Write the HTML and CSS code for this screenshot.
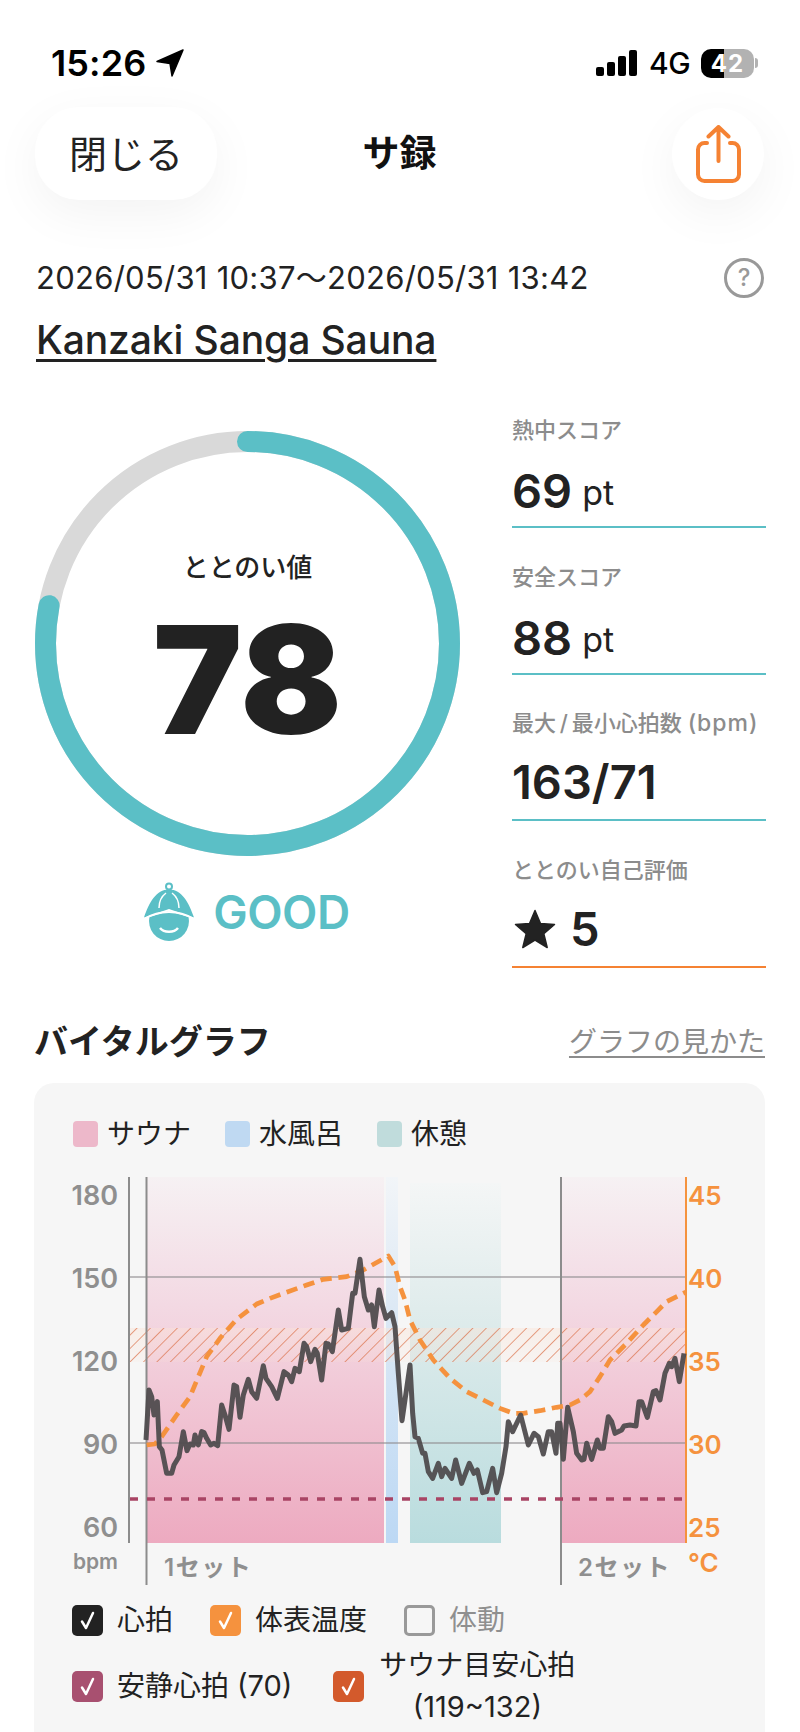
FILE: index.html
```html
<!DOCTYPE html>
<html lang="ja">
<head>
<meta charset="utf-8">
<title>サ録</title>
<link rel="stylesheet" href="styles.css">
</head>
<body>
<div class="status">
  <div class="status-left">
    <span class="time">15:26</span>
    <svg class="loc" viewBox="0 0 28 28"><path d="M27 1 1 12.500 14 14.500 16 27Z" fill="#000" stroke="#000" stroke-width="1.500" stroke-linejoin="round"/></svg>
  </div>
  <div class="status-right">
    <div class="signal"><i class="b1"></i><i class="b2"></i><i class="b3"></i><i class="b4"></i></div>
    <span class="net">4G</span>
    <div class="battery"><span>42</span></div>
    <div class="battery-tip"></div>
  </div>
</div>

<nav class="nav">
  <button class="close">閉じる</button>
  <h1 class="nav-title">サ録</h1>
  <button class="share">
    <svg viewBox="0 0 45 58" width="45" height="58"><path d="M11 18H8.500A6.500 6.500 0 0 0 2 24.500V49.500A6.500 6.500 0 0 0 8.500 56H36.500A6.500 6.500 0 0 0 43 49.500V24.500A6.500 6.500 0 0 0 36.500 18H34M22.500 36V2M12.500 11.500 22.500 2 32.500 11.500" fill="none" stroke="#f58233" stroke-width="4" stroke-linecap="round" stroke-linejoin="round"/></svg>
  </button>
</nav>

<div class="when">
  <span>2026/05/31 10:37～2026/05/31 13:42</span>
  <span class="help">?</span>
</div>
<a class="place">Kanzaki Sanga Sauna</a>

<section class="main">
  <div class="gauge-col">
    <div class="gauge">
      <svg viewBox="0 0 425 425" width="425" height="425">
        <circle cx="212.500" cy="212.500" r="202" fill="none" stroke="#d9d9d9" stroke-width="21"/>
        <circle cx="212.500" cy="212.500" r="202" fill="none" stroke="#5bbfc6" stroke-width="21" stroke-linecap="round" pathLength="100" stroke-dasharray="78 22" transform="rotate(-90 212.500 212.500)"/>
      </svg>
      <div class="gauge-text">
        <div class="gauge-label">ととのい値</div>
        <div class="gauge-num">78</div>
      </div>
    </div>
    <div class="grade">
      <svg viewBox="144 882 52 59" width="52" height="59">
        <circle cx="170" cy="886.500" r="3" fill="none" stroke="#5bbfc6" stroke-width="2"/>
        <path d="M150.400 917 170 911 189.600 917A20 20 0 1 1 150.400 917Z" fill="#5bbfc6"/>
        <path d="M170 889.500C157 889.500 150 903 145 917.500L170 909 195 917.500C190 903 183 889.500 170 889.500Z" fill="#5bbfc6"/>
        <path d="M145 919Q157 912 170 912T195 919" fill="none" stroke="#fff" stroke-width="2"/>
        <path d="M160 908C160 901 163 896 167 893M180 908C180 901 177 896 173 893" fill="none" stroke="#fff" stroke-width="1.500"/>
        <path d="M161 928C165 933 175 933 179 928" fill="none" stroke="#fff" stroke-width="2.500"/>
      </svg>
      <span>GOOD</span>
    </div>
  </div>
  <div class="scores">
    <div class="score"><div class="score-label">熱中スコア</div><div class="score-val">69 <small>pt</small></div></div>
    <div class="score"><div class="score-label">安全スコア</div><div class="score-val">88 <small>pt</small></div></div>
    <div class="score"><div class="score-label">最大&#8201;/&#8201;最小心拍数 <span class="unit">(bpm)</span></div><div class="score-val">163/71</div></div>
    <div class="score score-self"><div class="score-label">ととのい自己評価</div><div class="score-val"><svg class="star" viewBox="0 0 42 40" width="42" height="40"><path d="M21 1.500 26.500 14.500 40.500 15.500 29.800 24.700 33.200 38.500 21 31 8.800 38.500 12.200 24.700 1.500 15.500 15.500 14.500Z" fill="#222" stroke="#222" stroke-width="1.500" stroke-linejoin="round"/></svg>5</div></div>
  </div>
</section>

<div class="section-head">
  <h2>バイタルグラフ</h2>
  <a>グラフの見かた</a>
</div>

<section class="card">
  <div class="legend">
    <div class="legend-item"><i class="sw sw-sauna"></i>サウナ</div>
    <div class="legend-item"><i class="sw sw-water"></i>水風呂</div>
    <div class="legend-item"><i class="sw sw-rest"></i>休憩</div>
  </div>

  <svg class="chart" viewBox="34 1165 731 432" width="731" height="432">
    <defs>
      <linearGradient id="gPink" x1="0" y1="0" x2="0" y2="1">
        <stop offset="0" stop-color="#f6f1f3"/><stop offset=".35" stop-color="#f3d9e3"/><stop offset="1" stop-color="#edaac0"/>
      </linearGradient>
      <linearGradient id="gBlue" x1="0" y1="0" x2="0" y2="1">
        <stop offset="0" stop-color="#f2f5f8"/><stop offset=".35" stop-color="#dde9f5"/><stop offset="1" stop-color="#bcd8f4"/>
      </linearGradient>
      <linearGradient id="gRest" x1="0" y1="0" x2="0" y2="1">
        <stop offset="0" stop-color="#f4f6f6"/><stop offset=".35" stop-color="#e0ecec"/><stop offset="1" stop-color="#b9dcde"/>
      </linearGradient>
      <pattern id="hatch" width="9.500" height="9.500" patternUnits="userSpaceOnUse" patternTransform="rotate(45)">
        <line x1="0" y1="0" x2="0" y2="9.500" stroke="#d9663c" stroke-width="1.500" stroke-opacity=".8"/>
      </pattern>
      <linearGradient id="gBand" x1="0" y1="0" x2="0" y2="1">
        <stop offset="0" stop-color="#fbe3d6" stop-opacity=".45"/><stop offset="1" stop-color="#fbe3d6" stop-opacity=".15"/>
      </linearGradient>
    </defs>

    <rect x="147" y="1177" width="237" height="366" fill="url(#gPink)"/>
    <rect x="386" y="1177" width="12" height="366" fill="url(#gBlue)"/>
    <rect x="410" y="1183" width="91" height="360" fill="url(#gRest)"/>
    <rect x="562" y="1177" width="124" height="366" fill="url(#gPink)"/>

    <line class="grid" x1="130" x2="686" y1="1277" y2="1277"/>
    <line class="grid" x1="130" x2="686" y1="1443" y2="1443"/>

    <rect x="130" y="1328" width="556" height="34" fill="url(#gBand)"/>
    <rect x="130" y="1328" width="556" height="34" fill="url(#hatch)"/>

    <line class="axis" x1="129" x2="129" y1="1177" y2="1543"/>
    <line class="axis" x1="146.500" x2="146.500" y1="1177" y2="1585"/>
    <line class="axis" x1="561" x2="561" y1="1177" y2="1585"/>
    <line class="axis-t" x1="686" x2="686" y1="1177" y2="1543"/>

    <line class="rest-line" x1="130" x2="686" y1="1499" y2="1499"/>

    <g transform="translate(30 1300) scale(.33333)">
      <polyline class="temp" points="350,435 375,432 395,410 440,345 480,290 505,230 530,170 570,115 620,58 680,12 720,-5 830,-45 880,-62 950,-70 1000,-90 1075,-132 1095,-100 1110,-40 1125,0 1140,60 1170,120 1210,180 1260,235 1310,275 1360,300 1410,325 1450,340 1480,340 1530,332 1580,322 1620,315 1650,300 1680,275 1710,230 1740,180 1790,130 1840,75 1910,5 1968,-24"/>
      <polyline class="heart" points="348,420 357,270 365,290 372,345 382,305 388,440 396,450 410,520 425,520 432,495 447,470 460,395 471,452 480,432 490,435 495,405 505,435 515,395 522,398 530,415 542,435 552,430 563,437 575,315 585,345 597,388 612,255 620,260 630,352 640,285 655,238 665,275 680,295 700,197 708,235 725,260 742,295 762,215 775,225 785,245 795,205 808,215 822,130 830,140 842,185 855,148 862,160 875,240 888,130 895,132 907,155 925,30 935,90 955,85 968,-20 975,-20 990,-122 1003,-10 1015,30 1025,15 1033,80 1047,-30 1058,20 1068,55 1085,38 1095,80 1105,220 1116,362 1125,300 1140,195 1148,340 1155,410 1165,415 1178,460 1185,460 1195,515 1208,535 1225,490 1235,530 1245,505 1265,535 1277,480 1295,550 1318,490 1332,520 1342,510 1358,578 1370,575 1388,505 1400,578 1415,520 1428,440 1435,365 1448,395 1472,345 1495,435 1512,400 1525,410 1540,462 1555,395 1565,395 1578,460 1583,370 1590,370 1600,478 1613,322 1630,395 1640,460 1655,480 1662,478 1670,430 1685,478 1702,420 1710,445 1720,445 1735,350 1745,365 1755,400 1775,390 1782,378 1800,375 1818,378 1827,305 1835,305 1852,352 1870,275 1878,272 1890,300 1905,220 1918,190 1925,200 1935,175 1948,245 1962,160"/>
    </g>

    <text class="tick" x="118" y="1205">180</text>
    <text class="tick" x="118" y="1288">150</text>
    <text class="tick" x="118" y="1371">120</text>
    <text class="tick" x="118" y="1454">90</text>
    <text class="tick" x="118" y="1537">60</text>
    <text class="bpm" x="118" y="1569">bpm</text>

    <text class="tick-r" x="688" y="1205">45</text>
    <text class="tick-r" x="688" y="1288">40</text>
    <text class="tick-r" x="688" y="1371">35</text>
    <text class="tick-r" x="688" y="1454">30</text>
    <text class="tick-r" x="688" y="1537">25</text>
    <text class="tick-r" x="688" y="1572">°C</text>

    <text class="set" x="164" y="1576">1セット</text>
    <text class="set" x="578" y="1576">2セット</text>
  </svg>

  <div class="checks">
    <label class="check"><i class="box box-black"><svg viewBox="0 0 31 31"><path d="M10 16.500 14 23 21 8"/></svg></i>心拍</label>
    <label class="check"><i class="box box-orange"><svg viewBox="0 0 31 31"><path d="M10 16.500 14 23 21 8"/></svg></i>体表温度</label>
    <label class="check check-off"><i class="box box-empty"></i>体動</label>
  </div>
  <div class="checks checks-2">
    <label class="check"><i class="box box-maroon"><svg viewBox="0 0 31 31"><path d="M10 16.500 14 23 21 8"/></svg></i><span>安静心拍 <span class="num">(70)</span></span></label>
    <label class="check check-wide"><i class="box box-red"><svg viewBox="0 0 31 31"><path d="M10 16.500 14 23 21 8"/></svg></i><span class="check-lines">サウナ目安心拍<br><span class="num">(119~132)</span></span></label>
  </div>
</section>
</body>
</html>
```

FILE: styles.css
```css
* { box-sizing: border-box; }
html, body { margin: 0; padding: 0; height: 1732px; overflow: hidden; background: #fff; }
body { font-family: "Inter", "Noto Sans CJK JP", sans-serif; color: #222; }
h1, h2 { margin: 0; }

.status { height: 107px; padding: 44px 42px 0 51px; display: flex; justify-content: space-between; align-items: flex-start; color: #000; }
.status-left { display: flex; align-items: center; gap: 10px; height: 38px; }
.time { font-size: 36px; font-weight: 600; letter-spacing: .1px; line-height: 38px; }
.loc { width: 28px; height: 28px; }
.status-right { display: flex; align-items: center; height: 38px; }
.signal { display: flex; align-items: flex-end; gap: 3px; height: 26px; width: 41px; }
.signal i { width: 8px; background: #000; border-radius: 2px; display: block; }
.b1 { height: 9px; } .b2 { height: 14px; } .b3 { height: 20px; } .b4 { height: 26px; }
.net { margin-left: 12px; font-size: 30px; font-weight: 500; line-height: 38px; width: 40px; letter-spacing: -.5px; }
.battery { margin-left: 12px; width: 53px; height: 29px; border-radius: 10px; background: linear-gradient(90deg, #000 0 43%, #b2b2b2 43% 100%); color: #fff; font-size: 24px; font-weight: 700; line-height: 29px; text-align: center; letter-spacing: 1px; }
.battery-tip { width: 3px; height: 10px; margin-left: 1px; background: #b2b2b2; border-radius: 0 3px 3px 0; }

.nav { height: 93px; padding: 0 36px 0 35px; display: flex; justify-content: space-between; align-items: center; }
.close { width: 182px; height: 93px; border: 0; border-radius: 44px; background: #fff; box-shadow: 0 14px 50px rgba(0,0,0,.05); font: 400 38px/1 "Inter", "Noto Sans CJK JP", sans-serif; color: #222; padding: 0; }
.nav-title { font-size: 37px; font-weight: 700; color: #111; line-height: 93px; margin-left: -90px; }
.share { width: 92px; height: 92px; border: 0; border-radius: 50%; background: #fff; box-shadow: 0 14px 50px rgba(0,0,0,.05); padding: 0; display: flex; align-items: center; justify-content: center; }

.when { margin-top: 58px; padding: 0 36px; height: 40px; display: flex; justify-content: space-between; align-items: center; font-size: 31px; line-height: 40px; letter-spacing: .26px; }
.help { width: 40px; height: 40px; border: 3px solid #999; border-radius: 50%; color: #999; font-size: 24px; line-height: 33px; text-align: center; font-weight: 500; letter-spacing: 0; }
.place { display: inline-block; margin: 19px 0 0 36px; font-size: 39px; line-height: 45px; font-weight: 500; color: #222; letter-spacing: -.1px; text-decoration: underline; text-decoration-thickness: 3px; text-underline-offset: 5px; }

.main { display: flex; gap: 52px; padding: 0 34px 0 35px; margin-top: 53px; }
.gauge-col { width: 425px; padding-top: 16px; flex: none; }
.gauge { position: relative; width: 425px; height: 425px; }
.gauge svg { display: block; }
.gauge-text { position: absolute; inset: 0; display: flex; flex-direction: column; align-items: center; }
.gauge-label { margin-top: 118px; font-size: 26px; font-weight: 500; line-height: 38px; }
.gauge-num { margin-top: 13px; font-size: 150px; line-height: 160px; font-weight: 900; letter-spacing: 0; }
.grade { margin-top: 26px; height: 59px; display: flex; justify-content: center; align-items: center; gap: 18px; padding-right: 2px; color: #5bbfc6; font-size: 46px; font-weight: 600; letter-spacing: -.5px; }
.grade svg { display: block; }

.scores { width: 254px; display: flex; flex-direction: column; gap: 33.5px; }
.score { height: 113px; border-bottom: 2px solid #5bbfc6; }
.score-self { border-bottom-color: #f58233; }
.score-label { font-size: 22px; line-height: 30px; color: #8c8c8c; font-weight: 500; white-space: nowrap; }
.unit { letter-spacing: 1px; font-size: 23px; }
.score-val { margin-top: 14px; font-size: 47px; line-height: 60px; font-weight: 600; display: flex; align-items: center; gap: 10px; white-space: nowrap; }
.score-val small { font-size: 34px; font-weight: 400; padding-top: 4px; }
.star { display: block; margin-left: 2px; margin-right: 4px; }

.section-head { margin-top: 52px; padding: 0 35px 0 34px; height: 44px; display: flex; justify-content: space-between; align-items: center; }
.section-head h2 { font-size: 34px; font-weight: 700; line-height: 44px; }
.section-head a { font-size: 28px; color: #8c8c8c; text-decoration: underline; text-underline-offset: 4px; line-height: 40px; }

.card { margin: 19px 35px 0 34px; background: #f6f6f6; border-radius: 20px; padding-top: 38px; height: 700px; }
.legend { display: flex; gap: 34px; padding-left: 39px; height: 26px; }
.legend-item { display: flex; align-items: center; gap: 9px; font-size: 28px; line-height: 26px; }
.sw { width: 25px; height: 26px; border-radius: 4px; display: block; }
.sw-sauna { background: #edb8ca; }
.sw-water { background: #bfd9f2; }
.sw-rest { background: #c0dcdc; }

.chart { display: block; margin-top: 18px; }
.grid { stroke: #8f8c8f; stroke-width: 1.500; opacity: .75; }
.axis { stroke: #8c8c8c; stroke-width: 2; }
.axis-t { stroke: #f5923e; stroke-width: 2; }
.rest-line { stroke: #a94464; stroke-width: 3.500; stroke-dasharray: 8 9; }
.temp { fill: none; stroke: #f5923e; stroke-width: 14; stroke-dasharray: 34 20; stroke-linejoin: round; }
.heart { fill: none; stroke: #4f4c4e; stroke-width: 15; stroke-linejoin: round; opacity: .95; }
.tick { font-size: 27px; font-weight: 600; fill: #8f8f8f; text-anchor: end; }
.tick-r { font-size: 26px; font-weight: 600; fill: #f5923e; }
.bpm { font-size: 21px; font-weight: 600; fill: #8f8f8f; text-anchor: end; }
.set { font-size: 24px; font-weight: 600; fill: #8f8f8f; letter-spacing: 1.5px; }

.checks { display: flex; gap: 37px; padding-left: 38px; margin-top: 8px; height: 31px; }
.checks-2 { margin-top: 35px; gap: 41px; }
.check { display: flex; align-items: center; gap: 14px; font-size: 28px; white-space: nowrap; line-height: 31px; }
.check-off { color: #8f8f8f; }
.check-wide { line-height: 41px; text-align: center; }
.check-lines { display: block; padding-left: 1px; }
.num { font-size: 29px; }
.box { width: 31px; height: 31px; border-radius: 5px; display: block; flex: none; }
.box svg { display: block; width: 31px; height: 31px; fill: none; stroke: #fff; stroke-width: 2.500; stroke-linecap: round; stroke-linejoin: round; }
.box-black { background: #222; }
.box-orange { background: #f5923e; }
.box-maroon { background: #a85070; }
.box-red { background: #d35a2c; }
.box-empty { border: 3px solid #999; }
```
